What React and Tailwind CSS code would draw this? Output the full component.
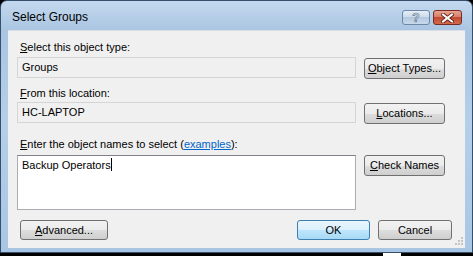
import React from "react";

const font = { fontFamily: '"Liberation Sans", Arial, sans-serif' };

function Btn({ children, className = "", def = false }) {
  return (
    <div
      className={
        "flex items-center justify-center rounded-[3px] border text-[11px] text-black " +
        (def
          ? "border-[#3c7fb1] bg-[linear-gradient(to_bottom,#eaf6fd_0%,#d9f0fc_50%,#bee6fd_50%,#a7d9f5_100%)] "
          : "border-[#707070] bg-[linear-gradient(to_bottom,#f2f2f2_0%,#ebebeb_50%,#dddddd_50%,#cfcfcf_100%)] ") +
        className
      }
    >
      {children}
    </div>
  );
}

export default function App() {
  return (
    <div className="w-[473px] h-[256px] bg-black overflow-hidden" style={font}>
      <div className="w-[473px] h-[253px] rounded-t-[7px] border border-[#364f6b] bg-[linear-gradient(to_bottom,#c3d8ee_0px,#a9c5e2_30px,#b5cfe9_120px,#a8c6e4_253px)] flex flex-col">
        {/* title bar */}
        <div className="h-[29px] flex items-start shrink-0">
          <div className="ml-[11px] mt-[9px] text-[12px] text-black leading-[15px]">Select Groups</div>
          <div className="ml-auto mt-[9px] mr-[10px] flex gap-[3px]">
            <div className="w-[28px] h-[15px] rounded-[3px] border border-[#6d87a7] bg-[linear-gradient(to_bottom,#e6eef7_0%,#c9d9ea_50%,#b3c8df_50%,#c8d9eb_100%)] flex items-center justify-center">
              <span className="text-[12px] leading-[12px] font-bold text-[#f4f7fa]" style={{ WebkitTextStroke: "0.6px #4d6482" }}>?</span>
            </div>
            <div className="w-[29px] h-[15px] rounded-[3px] border border-[#7a2a20] bg-[linear-gradient(to_bottom,#e8a493_0%,#d47a66_50%,#c14a30_50%,#d26a4c_100%)] flex items-center justify-center">
              <svg width="13" height="10" viewBox="0 0 13 10">
                <path d="M2 1.5 L11 8.5 M11 1.5 L2 8.5" stroke="#5a1a10" strokeWidth="3.6" strokeLinecap="square" />
                <path d="M2 1.5 L11 8.5 M11 1.5 L2 8.5" stroke="#ffffff" strokeWidth="2" strokeLinecap="square" />
              </svg>
            </div>
          </div>
        </div>
        {/* content */}
        <div className="mx-[7px] h-[218px] bg-[#f0f0f0] border-t border-[#dadfe6] relative">
          <div className="pl-[12px] pt-[9px] text-[11px] leading-[15px] text-black">
            <span className="underline">S</span>elect this object type:
          </div>
          <div className="flex mt-[2px] ml-[9px]">
            <div className="w-[339px] h-[21px] border border-[#d5d5d5] bg-[#f0f0f0] text-[11px] leading-[19px] pl-[4px] text-black">Groups</div>
            <Btn className="ml-[8px] mt-[1px] w-[81px] h-[21px]">
              <span><span className="underline">O</span>bject Types...</span>
            </Btn>
          </div>
          <div className="pl-[12px] pt-[7px] text-[11px] leading-[15px] text-black">
            <span className="underline">F</span>rom this location:
          </div>
          <div className="flex mt-[1px] ml-[9px]">
            <div className="w-[339px] h-[21px] border border-[#d5d5d5] bg-[#f0f0f0] text-[11px] leading-[19px] pl-[4px] text-black">HC-LAPTOP</div>
            <Btn className="ml-[8px] mt-[1px] w-[81px] h-[21px]">
              <span><span className="underline">L</span>ocations...</span>
            </Btn>
          </div>
          <div className="pl-[12px] pt-[13px] text-[11px] leading-[15px] text-black">
            <span className="underline">E</span>nter the object names to select (<span className="text-[#0066cc] underline">examples</span>):
          </div>
          <div className="flex mt-[3px] ml-[9px]">
            <div className="w-[339px] h-[55px] border border-[#abadb3] border-t-[#7f8189] bg-white text-[11px] leading-[15px] pl-[4px] pt-[2px] text-black">
              Backup Operators<span className="inline-block w-px h-[13px] bg-black align-[-2px]"></span>
            </div>
            <Btn className="ml-[8px] w-[81px] h-[21px]">
              <span><span className="underline">C</span>heck Names</span>
            </Btn>
          </div>
          <div className="flex mt-[10px] ml-[12px]">
            <Btn className="w-[88px] h-[20px]">
              <span><span className="underline">A</span>dvanced...</span>
            </Btn>
            <Btn def className="ml-[189px] w-[73px] h-[20px]">OK</Btn>
            <Btn className="ml-[8px] w-[74px] h-[20px]">Cancel</Btn>
          </div>
          <div className="absolute right-[2px] bottom-[3px] grid grid-cols-3 gap-[1px] w-[8px]">
            <span></span><span></span><span className="w-[2px] h-[2px] bg-[#c5c5c5]"></span>
            <span></span><span className="w-[2px] h-[2px] bg-[#c5c5c5]"></span><span className="w-[2px] h-[2px] bg-[#c5c5c5]"></span>
            <span className="w-[2px] h-[2px] bg-[#c5c5c5]"></span><span className="w-[2px] h-[2px] bg-[#c5c5c5]"></span><span className="w-[2px] h-[2px] bg-[#c5c5c5]"></span>
          </div>
        </div>
      </div>
      <div className="h-[3px] flex">
        <div className="w-[383px]"></div>
        <div className="w-[18px] bg-white"></div>
      </div>
    </div>
  );
}
